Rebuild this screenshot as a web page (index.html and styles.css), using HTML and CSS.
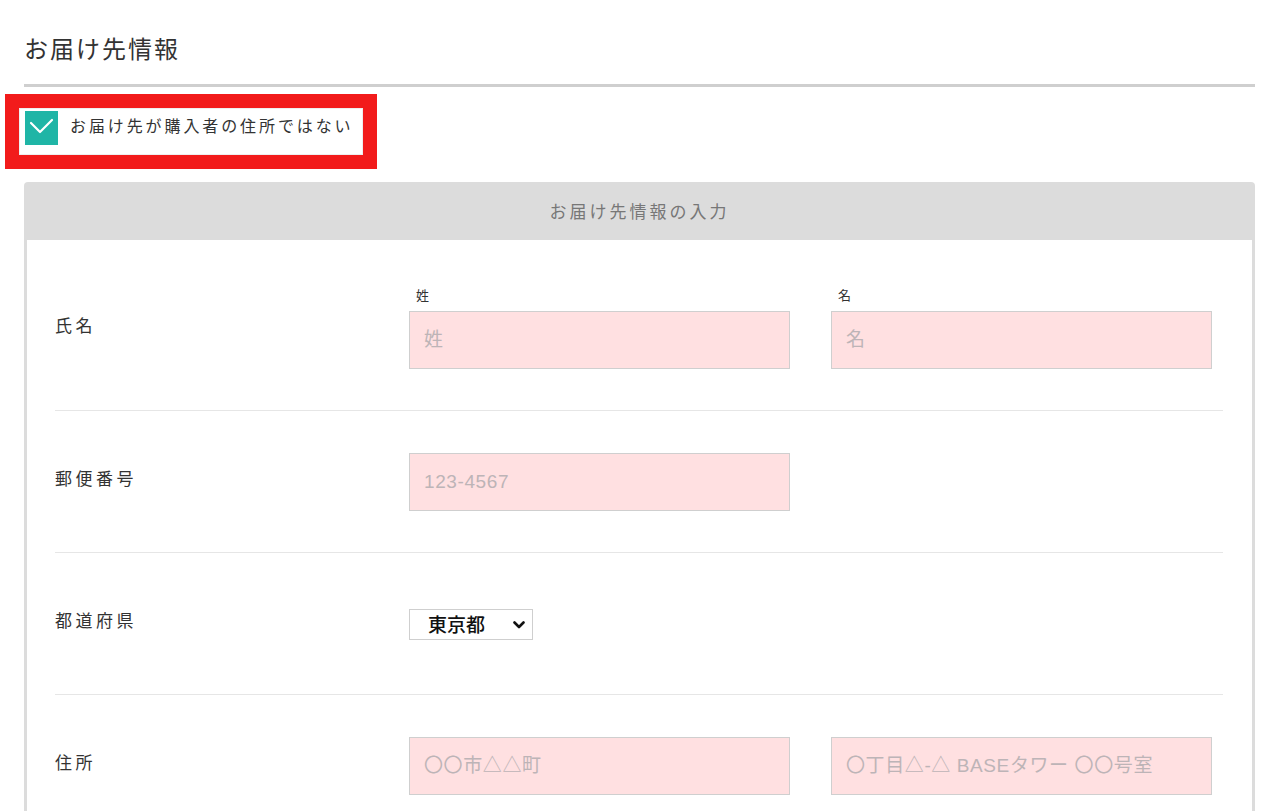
FILE: index.html
```html
<!DOCTYPE html>
<html lang="ja">
<head>
    <meta charset="UTF-8">
    <meta name="viewport" content="width=device-width, initial-scale=1.0">
    <title>お届け先情報</title>
    <link rel="stylesheet" href="styles.css">
</head>
<body>
    <div class="page">
        <h2 class="section-title">お届け先情報</h2>

        <label class="other-address">
            <span class="check">
                <svg width="33" height="34" viewBox="0 0 33 34">
                    <polyline points="6,12 15,21 27,9" fill="none" stroke="#fff" stroke-width="2.2" stroke-linecap="round" stroke-linejoin="round"/>
                </svg>
            </span>
            <span class="check-text">お届け先が購入者の住所ではない</span>
        </label>

        <div class="panel">
            <div class="panel-head">お届け先情報の入力</div>
            <div class="panel-body">
                <div class="row row-first">
                    <div class="row-label">氏名</div>
                    <div class="fields">
                        <div class="field">
                            <span class="field-label">姓</span>
                            <input type="text" placeholder="姓">
                        </div>
                        <div class="field">
                            <span class="field-label">名</span>
                            <input type="text" placeholder="名">
                        </div>
                    </div>
                </div>

                <div class="row">
                    <div class="row-label">郵便番号</div>
                    <div class="fields">
                        <div class="field">
                            <input type="text" placeholder="123-4567">
                        </div>
                    </div>
                </div>

                <div class="row">
                    <div class="row-label">都道府県</div>
                    <div class="fields">
                        <div class="select-wrap">
                            <select class="pref">
                                <option>東京都</option>
                            </select>
                            <svg class="chevron" width="12" height="8" viewBox="0 0 12 8">
                                <polyline points="1.5,1.5 6,6 10.5,1.5" fill="none" stroke="#111" stroke-width="2.6" stroke-linecap="round" stroke-linejoin="round"/>
                            </svg>
                        </div>
                    </div>
                </div>

                <div class="row">
                    <div class="row-label">住所</div>
                    <div class="fields">
                        <div class="field">
                            <input type="text" placeholder="〇〇市△△町">
                        </div>
                        <div class="field">
                            <input type="text" placeholder="〇丁目△-△ BASEタワー 〇〇号室">
                        </div>
                    </div>
                </div>
            </div>
        </div>
    </div>
</body>
</html>
```

FILE: styles.css
```css
* {
    margin: 0;
    padding: 0;
    box-sizing: border-box;
}

body {
    font-family: 'Liberation Sans', 'Noto Sans CJK JP', sans-serif;
    background-color: #fff;
    color: #333;
}

.page {
    padding: 0 25px 0 24px;
}

.section-title {
    font-size: 24px;
    font-weight: normal;
    letter-spacing: 2px;
    line-height: 32px;
    padding-top: 34px;
    padding-bottom: 18px;
    border-bottom: 3px solid #cfcfcf;
}

/* checkbox row, highlighted with the red frame */
.other-address {
    display: inline-flex;
    align-items: flex-start;
    gap: 12px;
    margin: 21px 0 0 -5px;
    padding: 2px 8px 0 5px;
    height: 47px;
    background: #fff;
    border: 1px solid #eee;
    outline: 14px solid #f21b1b;
}

.check {
    display: block;
    width: 33px;
    height: 34px;
    background-color: #1fb5a6;
}

.check svg {
    display: block;
}

.check-text {
    font-size: 16px;
    line-height: 32px;
    letter-spacing: 2.9px;
    color: #333;
}

.panel {
    margin-top: 27px;
    border: 3px solid #dcdcdc;
    border-bottom: none;
    border-radius: 4px 4px 0 0;
}

.panel-head {
    background-color: #dcdcdc;
    height: 55px;
    line-height: 55px;
    text-align: center;
    font-size: 17px;
    letter-spacing: 3px;
    color: #777;
}

.panel-body {
    padding: 0 29px 0 28px;
}

.row {
    display: grid;
    grid-template-columns: 354px 1fr;
    align-items: center;
    padding: 42px 0 41px;
    border-bottom: 1px solid #e6e6e6;
}

.row-first {
    padding-top: 48px;
}

.row-label {
    font-size: 17px;
    letter-spacing: 3.5px;
    padding-bottom: 9px;
    color: #333;
}

.fields {
    display: flex;
    align-items: flex-end;
    gap: 41px;
    min-height: 58px;
}

.field {
    display: flex;
    flex-direction: column;
    width: 381px;
}

.field-label {
    font-size: 13px;
    line-height: 16px;
    margin: 0 0 7px 7px;
    color: #333;
}

.field input {
    height: 58px;
    padding: 0 14px;
    border: 1px solid #cfcfcf;
    background-color: #ffe0e1;
    font-family: inherit;
    font-size: 19px;
    letter-spacing: 0.6px;
    color: #333;
}

.field input::placeholder {
    color: #bdb4b7;
}

.select-wrap {
    position: relative;
    align-self: center;
}

.pref {
    appearance: none;
    -webkit-appearance: none;
    width: 124px;
    height: 31px;
    padding: 3px 0 0 18px;
    border: 1px solid #cfcfcf;
    border-radius: 0;
    background: #fff;
    font-family: inherit;
    font-size: 19px;
    font-weight: 500;
    color: #111;
}

.chevron {
    position: absolute;
    right: 8px;
    top: 12px;
    pointer-events: none;
}
```
